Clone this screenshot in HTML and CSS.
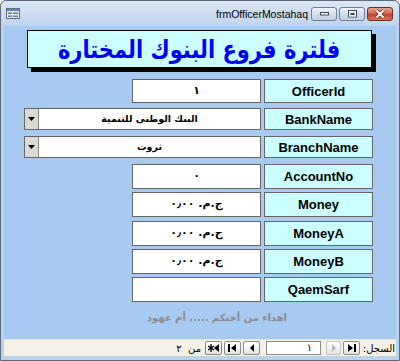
FILE: index.html
```html
<!DOCTYPE html>
<html lang="ar">
<head>
    <meta charset="UTF-8">
    <meta name="viewport" content="width=device-width, initial-scale=1.0">
    <title>frmOfficerMostahaq</title>
    <link rel="stylesheet" href="styles.css">
</head>
<body>

    <div class="window">

        <!-- Title Bar -->
        <div class="titlebar">
            <svg class="app-icon" width="14" height="11" viewBox="0 0 14 11">
                <rect x="0.5" y="0.5" width="13" height="10" fill="#e4e9f0" stroke="#5a6a80"/>
                <rect x="1" y="1" width="12" height="2" fill="#5d86c0"/>
                <rect x="2" y="4.5" width="4" height="1.5" fill="#6a7a90"/>
                <rect x="7" y="4.5" width="5" height="1.5" fill="#6a7a90"/>
                <rect x="2" y="7.5" width="4" height="1.5" fill="#6a7a90"/>
                <rect x="7" y="7.5" width="5" height="1.5" fill="#6a7a90"/>
            </svg>
            <span class="title">frmOfficerMostahaq</span>
            <div class="controls">
                <span class="ctl">
                    <svg width="11" height="5" viewBox="0 0 11 5"><rect x="1.5" y="1.5" width="8" height="2.5" fill="#fff" stroke="#3b4758"/></svg>
                </span>
                <span class="ctl">
                    <svg width="11" height="8" viewBox="0 0 11 8"><rect x="1.5" y="0.5" width="8" height="6.5" fill="none" stroke="#3b4758"/><rect x="2.5" y="1.5" width="6" height="4.5" fill="none" stroke="#fff"/><rect x="3.5" y="3" width="4" height="2" fill="#3b4758"/></svg>
                </span>
                <span class="ctl close">
                    <svg width="12" height="10" viewBox="0 0 12 10"><path d="M2.5 1.5 L9.5 8.5 M9.5 1.5 L2.5 8.5" stroke="#5a2418" stroke-width="3.4"/><path d="M2.5 1.5 L9.5 8.5 M9.5 1.5 L2.5 8.5" stroke="#fff" stroke-width="2"/></svg>
                </span>
            </div>
        </div>

        <div class="frame">
            <div class="form">
                <div class="banner">
                    <h1>فلترة فروع البنوك المختارة</h1>
                </div>

                <div class="fields">
                    <div class="row first">
                        <div class="value">١</div>
                        <div class="label">OfficerId</div>
                    </div>
                    <div class="row combo">
                        <div class="value wide">
                            <span class="drop"><svg width="7" height="4" viewBox="0 0 7 4"><polygon points="0,0 7,0 3.5,4" fill="#000"/></svg></span>
                            <span class="text">البنك الوطنى للتنمية</span>
                        </div>
                        <div class="label">BankName</div>
                    </div>
                    <div class="row combo">
                        <div class="value wide">
                            <span class="drop"><svg width="7" height="4" viewBox="0 0 7 4"><polygon points="0,0 7,0 3.5,4" fill="#000"/></svg></span>
                            <span class="text">ثروت</span>
                        </div>
                        <div class="label">BranchName</div>
                    </div>
                    <div class="row">
                        <div class="value">٠</div>
                        <div class="label">AccountNo</div>
                    </div>
                    <div class="row">
                        <div class="value">ج.م. ٠٫٠٠</div>
                        <div class="label">Money</div>
                    </div>
                    <div class="row">
                        <div class="value">ج.م. ٠٫٠٠</div>
                        <div class="label">MoneyA</div>
                    </div>
                    <div class="row">
                        <div class="value">ج.م. ٠٫٠٠</div>
                        <div class="label">MoneyB</div>
                    </div>
                    <div class="row">
                        <div class="value"></div>
                        <div class="label">QaemSarf</div>
                    </div>
                </div>

                <p class="credit">اهداء من أختكم ..... أم عهود</p>
            </div>

            <!-- Record Navigator -->
            <div class="navbar">
                <span class="nav-label">السجل:</span>
                <span class="nav-btn">
                    <svg width="9" height="8" viewBox="0 0 9 8"><polygon points="1,0 6,4 1,8" fill="#000"/><rect x="7" y="0" width="2" height="8" fill="#000"/></svg>
                </span>
                <span class="nav-btn off">
                    <svg width="6" height="8" viewBox="0 0 6 8"><polygon points="1,0 5,4 1,8" fill="#b8b8b8"/></svg>
                </span>
                <span class="nav-box">١</span>
                <span class="nav-btn">
                    <svg width="6" height="8" viewBox="0 0 6 8"><polygon points="5,0 1,4 5,8" fill="#000"/></svg>
                </span>
                <span class="nav-btn">
                    <svg width="9" height="8" viewBox="0 0 9 8"><rect x="0" y="0" width="2" height="8" fill="#000"/><polygon points="8,0 3,4 8,8" fill="#000"/></svg>
                </span>
                <span class="nav-btn">
                    <svg width="12" height="8" viewBox="0 0 12 8"><path d="M3 0 V8 M0 2 L6 6 M6 2 L0 6" stroke="#000" stroke-width="1.3"/><polygon points="11,0 6,4 11,8" fill="#000"/></svg>
                </span>
                <span class="nav-of">من&nbsp;&nbsp;٢</span>
            </div>
        </div>

    </div>

</body>
</html>
```

FILE: styles.css
```css
* {
    margin: 0;
    padding: 0;
    box-sizing: border-box;
}
body {
    width: 400px;
    height: 361px;
    overflow: hidden;
    font-family: "Liberation Sans", Arial, sans-serif;
    background: #ffffff;
}
.window {
    width: 400px;
    height: 361px;
    display: flex;
    flex-direction: column;
    background: #bcd2ec;
    border: 1px solid #5f6b7c;
    border-radius: 6px 6px 0 0;
}
.titlebar {
    height: 25px;
    display: flex;
    align-items: center;
    padding: 0 6px 0 5px;
    background: linear-gradient(#dbe7f5, #bed3ed);
    border-radius: 6px 6px 0 0;
}
.app-icon {
    flex-shrink: 0;
}
.title {
    margin-left: auto;
    margin-right: 3px;
    font-size: 10.5px;
    color: #000;
}
.controls {
    display: flex;
    gap: 2px;
}
.ctl {
    width: 26px;
    height: 14px;
    display: flex;
    align-items: center;
    justify-content: center;
    border: 1px solid #6f7f96;
    border-radius: 3px;
    background: linear-gradient(#f0f4fa, #d2dcea 50%, #c3d1e4);
}
.ctl.close {
    border-color: #6e2c20;
    background: linear-gradient(#e8a596, #d06a52 45%, #c2452b 55%, #d8765c);
}
.frame {
    flex: 1;
    display: flex;
    flex-direction: column;
    padding: 0 3px 4px 3px;
}
.form {
    flex: 1;
    background: #a6caf0;
}
.banner {
    margin: 4px 24px 0 23px;
    height: 38px;
    background: #ccffff;
    border: 1px solid #000;
    box-shadow: 4px 4px 0 #000;
    display: flex;
    align-items: center;
    justify-content: center;
}
.banner h1 {
    font-family: "DejaVu Sans", sans-serif;
    font-size: 25px;
    font-weight: bold;
    color: #0000ff;
    direction: rtl;
    white-space: nowrap;
    transform: scaleX(0.84);
}
.fields {
    margin-top: 11px;
    padding-right: 23px;
}
.row {
    display: flex;
    justify-content: flex-end;
    gap: 3px;
    height: 25px;
    margin-bottom: 3.3px;
}
.row.first {
    height: 24px;
    margin-bottom: 5px;
}
.row.combo {
    height: 22px;
    margin-bottom: 6px;
}
.value {
    width: 129px;
    background: #ffffff;
    border: 1px solid #666666;
    text-align: center;
    direction: rtl;
    font-family: "DejaVu Sans", sans-serif;
    font-size: 11px;
    font-weight: bold;
    padding-top: 4px;
}
.value.wide {
    width: 237px;
    display: flex;
    flex-direction: row-reverse;
    padding-top: 0;
}
.drop {
    width: 14px;
    background: #dcdad2;
    border-right: 1px solid #8a8a8a;
    display: flex;
    align-items: center;
    justify-content: center;
}
.value.wide .text {
    flex: 1;
    padding-top: 4px;
    font-size: 9.5px;
}
.label {
    width: 109px;
    background: #ccffff;
    border: 1px solid #666666;
    text-align: center;
    font-size: 13px;
    font-weight: bold;
    padding-top: 4px;
}
.row.combo .label {
    padding-top: 3px;
}
.credit {
    width: 134px;
    margin: 10px 0 0 149px;
    text-align: center;
    direction: rtl;
    white-space: nowrap;
    font-family: "DejaVu Sans", sans-serif;
    font-size: 10px;
    font-weight: bold;
    color: #8c8c8c;
}
.navbar {
    height: 17px;
    display: flex;
    flex-direction: row-reverse;
    align-items: center;
    gap: 2px;
    padding-right: 1px;
    background: #f4f2e6;
    border-top: 1px solid #e6e4d8;
}
.nav-label {
    width: 33px;
    font-family: "DejaVu Sans", sans-serif;
    font-size: 10px;
    direction: rtl;
}
.nav-btn {
    width: 17px;
    height: 14px;
    display: flex;
    align-items: center;
    justify-content: center;
    border: 1px solid #8a8a8a;
    border-radius: 2px;
    background: linear-gradient(#ffffff, #e4e4e0);
}
.nav-btn.off {
    width: 15px;
    border-color: #c4c4c4;
}
.nav-box {
    width: 55px;
    height: 14px;
    margin: 0 3px 0 4px;
    background: #ffffff;
    border: 1px solid #8a8a8a;
    font-family: "DejaVu Sans", sans-serif;
    font-size: 10px;
    text-align: right;
    padding-right: 8px;
    line-height: 12px;
}
.nav-of {
    margin-right: 2px;
    font-family: "DejaVu Sans", sans-serif;
    font-size: 10px;
    direction: rtl;
}
```
